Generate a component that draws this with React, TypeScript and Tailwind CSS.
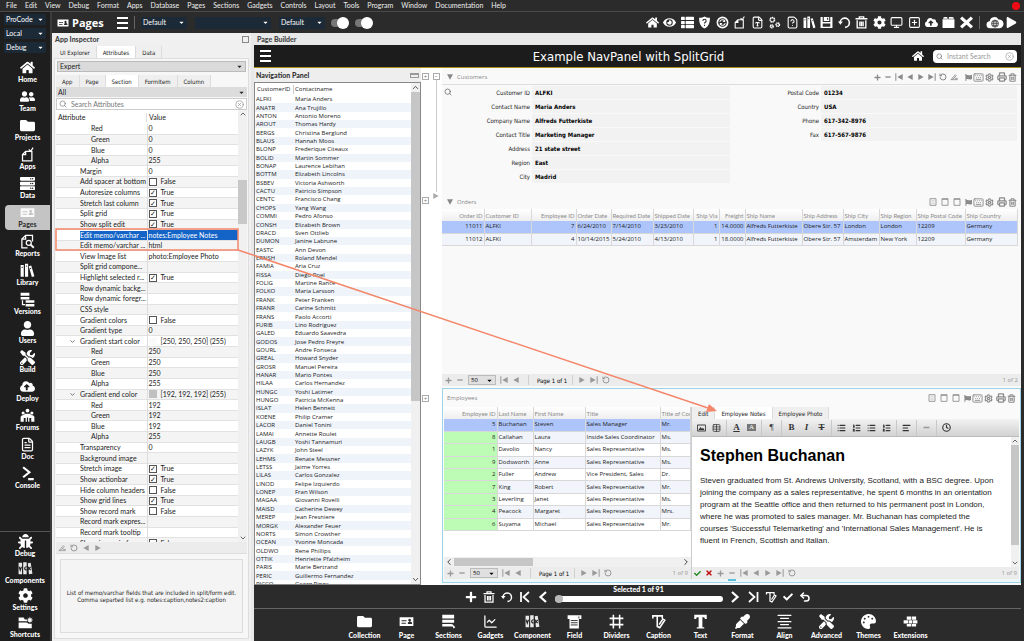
import React, { useState } from "react";
import type { IconType } from "react-icons";
import {
  FaBug,
  FaCaretDown,
  FaCheck,
  FaCloudUploadAlt,
  FaCog,
  FaEye,
  FaEyeDropper,
  FaFlag,
  FaFolder,
  FaHome,
  FaPalette,
  FaPlay,
  FaPlus,
  FaServer,
  FaThList,
  FaTimes,
  FaTools,
  FaUserFriends,
  FaUser,
} from "react-icons/fa";
import {
  AlignLeft,
  ChartLine,
  ChevronDown,
  ChevronLeft,
  ChevronRight,
  ChevronUp,
  CircleX,
  Clock,
  FileQuestionMark,
  FileText,
  FileType,
  Keyboard,
  List,
  ListOrdered,
  Monitor,
  Printer,
  RotateCcw,
  Search,
  Settings,
  SquarePlus,
  Table,
  Trash2,
  Undo2,
} from "lucide-react";

type Glyph = IconType | React.ElementType;

interface Tool {
  label: string;
  icon: Glyph;
}

interface Attribute {
  name: string;
  value?: string;
  level?: number;
  checked?: boolean;
  open?: boolean;
  swatch?: string;
}

type SvgProps = { className?: string };

// ---- custom icons ----

const PageCard = ({ className }: SvgProps) => (
  <svg viewBox="0 0 24 24" className={className} fill="currentColor" fillRule="evenodd">
    <path d="M1 5h22v14H1zM4 10v1.600h8V10zM4 14v1.600h7V14zM17 7.500a2.200 2.200 0 1 0 .01 0zM14 16h7c0-3-1.500-4-3.500-4S14 13 14 16z" />
  </svg>
);

const Books = ({ className }: SvgProps) => (
  <svg viewBox="0 0 24 24" className={className} fill="currentColor">
    <path d="M1 3h5v19H1zM8 1h5v21H8zM14 5l4-1 5 17-4 1.500z" />
    <path d="M2.500 7h2M9.500 5h2M16 9l2-.6" stroke="#222" strokeWidth="1.500" />
  </svg>
);

const BooksVcx = ({ className }: SvgProps) => (
  <svg viewBox="0 0 26 24" className={className} fill="currentColor">
    <path d="M1 2h6v20H1zM9 1h6v21H9zM17 3l5-1 3 19-6 1z" opacity="0.9" />
    <path d="M2 9l2 6 2-6M15 9c-4-1-5 6 0 5.500M17 9l5 6M22 9l-5 6" fill="none" stroke="#222" strokeWidth="2" />
  </svg>
);

const AppPage = ({ className }: SvgProps) => (
  <svg viewBox="0 0 24 24" className={className} fill="none" stroke="currentColor" strokeWidth="2">
    <path d="M9 7H19v15H4V12zM9 7v5H4" />
    <path d="M14 4l3 3 4-6" />
  </svg>
);

const ReportPage = ({ className }: SvgProps) => (
  <svg viewBox="0 0 24 24" className={className} fill="none" stroke="currentColor" strokeWidth="2">
    <path d="M20 12V2H9L3 8v14h9M9 2v6H3" />
    <circle cx="14" cy="14" r="4" />
    <path d="M17 17l5 5" strokeWidth="3" />
  </svg>
);

const Layers = ({ className }: SvgProps) => (
  <svg viewBox="0 0 24 24" className={className} fill="currentColor">
    <path d="M1 1h14v5H1zM1 8h14v4H1zM9 13h14v4H9zM9 19h14v4H9zM3 13h2v6h3v2H3z" />
  </svg>
);

const People = ({ className }: SvgProps) => (
  <svg viewBox="0 0 24 24" className={className} fill="currentColor">
    <circle cx="12" cy="4" r="3" />
    <circle cx="5" cy="8" r="2.500" />
    <circle cx="19" cy="8" r="2.500" />
    <path d="M1 22v-8q1-3 5-3l2-2h8l2 2q4 0 5 3v8h-5v-6h-3v6h-2v-7h-2v7H9v-6H6v6z" />
  </svg>
);

const Prompt = ({ className }: SvgProps) => (
  <svg viewBox="0 0 24 24" className={className} fill="none" stroke="currentColor" strokeWidth="3.500">
    <path d="M5 2l10 8-10 8M13 21h9" />
  </svg>
);

const FolderStar = ({ className }: SvgProps) => (
  <svg viewBox="0 0 24 24" className={className} fill="currentColor">
    <path d="M1 4h8l2 3h3l1 3H1zM1 12h13l3 2h5v7H1z" />
    <circle cx="19" cy="8" r="3" />
    <path d="M19 3v10M14 8h10M15.500 4.500l7 7M22.500 4.500l-7 7" stroke="currentColor" />
  </svg>
);

const Refresh = ({ className }: SvgProps) => (
  <svg viewBox="0 0 24 24" className={className} fill="none" stroke="currentColor" strokeWidth="3">
    <circle cx="12" cy="12" r="9.500" />
    <path d="M7 11a5 5 0 0 1 9-2M17 13a5 5 0 0 1-9 2" strokeWidth="2" />
    <path d="M17 6v5h-5zM7 18v-5h5z" fill="currentColor" stroke="none" />
  </svg>
);

const ShieldHelp = ({ className }: SvgProps) => (
  <svg viewBox="0 0 24 24" className={className} fill="currentColor">
    <path d="M12 1q5 3 10 2c0 9-2 16-10 20C4 19 2 12 2 3q5 1 10-2z" />
    <path d="M9 9c0-4 6-4 6 0 0 2.500-3 2.500-3 5M12 16v2.500" fill="none" stroke="#2b2b2b" strokeWidth="2" />
  </svg>
);

const Gears = ({ className }: SvgProps) => (
  <svg viewBox="0 0 24 24" className={className} fill="none" stroke="currentColor" strokeWidth="3">
    <circle cx="8" cy="7" r="4" strokeDasharray="2.500 .7" />
    <circle cx="7" cy="19" r="2.500" strokeDasharray="2 .6" />
    <circle cx="18" cy="16" r="3" strokeDasharray="2 .6" />
  </svg>
);

const Disk = ({ className }: SvgProps) => (
  <svg viewBox="0 0 24 24" className={className} fill="currentColor" fillRule="evenodd">
    <path d="M1 2h4v9h14V2h4v20H1zM7 2h10v7H7zM13 3v4h2V3zM5 14v6h14v-6z" />
  </svg>
);

const Bin = ({ className }: SvgProps) => (
  <svg viewBox="0 0 24 24" className={className} fill="none" stroke="currentColor" strokeWidth="2.500">
    <path d="M1 5h22M8 4V1.500h8V4M4 8v14h16V8M9 10v9M12 10v9M15 10v9" />
  </svg>
);

const Reset = ({ className }: SvgProps) => (
  <svg viewBox="0 0 24 24" className={className} fill="none" stroke="currentColor" strokeWidth="3">
    <path d="M4 13a8.500 8.500 0 1 1 9 8" />
    <path d="M0 10h9l-4.500 6z" fill="currentColor" stroke="none" />
  </svg>
);

const Box = ({ className }: SvgProps) => (
  <svg viewBox="0 0 24 24" className={className} fill="currentColor">
    <path d="M1 6h22v16H1zM2 5q0-3 3-3h4l2 3zM12 5l1-3h6q3 0 3 3z" />
  </svg>
);

const Cross = ({ className }: SvgProps) => (
  <svg viewBox="0 0 24 24" className={className} stroke="currentColor" strokeWidth="6">
    <path d="M2 3l20 18M22 3L2 21" />
  </svg>
);

const CloudGlobe = ({ className }: SvgProps) => (
  <svg viewBox="0 0 30 24" className={className} fill="currentColor">
    <path d="M7 21a6 6 0 0 1-1-12 8 8 0 0 1 15-3 7.500 7.500 0 0 1 2 15z" />
    <g fill="none" stroke="#444" strokeWidth="1.400">
      <circle cx="15" cy="13" r="6" />
      <ellipse cx="15" cy="13" rx="2.500" ry="6" />
      <path d="M9 13h12M10 10h10M10 16h10" />
    </g>
  </svg>
);

const SectionsIcon = ({ className }: SvgProps) => (
  <svg viewBox="0 0 24 24" className={className} fill="currentColor">
    <path d="M2 1h19v6H2zM2 9h19v5H2zM2 16h15l2 4H2zM17 15l6 6-3 2z" />
  </svg>
);

const FieldIcon = ({ className }: SvgProps) => (
  <svg viewBox="0 0 24 24" className={className} fill="currentColor">
    <path d="M1 2h22v6h-4v15H4V8H1z" />
    <path d="M6 10.500h11M6 14h11M6 17.500h11M19 4v3" stroke="#2b2b2b" strokeWidth="1.500" />
  </svg>
);

const Hash = ({ className }: SvgProps) => (
  <svg viewBox="0 0 24 24" className={className} fill="none" stroke="currentColor" strokeWidth="2.500">
    <path d="M7 1v22M17 1v22M1 7h22M1 17h22" />
  </svg>
);

const CaptionIcon = ({ className }: SvgProps) => (
  <svg viewBox="0 0 24 24" className={className} fill="none" stroke="currentColor" strokeWidth="2.500">
    <path d="M3 7V3h15v4M10 3v17l4 2 8-12-3-2-6 9" />
  </svg>
);

const TextIcon = ({ className }: SvgProps) => (
  <svg viewBox="0 0 24 24" className={className} fill="currentColor">
    <path d="M2 1h20v7h-3l-1-3h-3v16h3v2H6v-2h3V5H6L5 8H2z" />
  </svg>
);

const AlignIcon = ({ className }: SvgProps) => (
  <svg viewBox="0 0 24 24" className={className} stroke="currentColor" strokeWidth="2">
    <path d="M1 2h22M5 7h14M1 12h22M5 17h14M1 22h22" />
  </svg>
);

const Bricks = ({ className }: SvgProps) => (
  <svg viewBox="0 0 24 24" className={className} fill="currentColor">
    <path d="M6 4h7v5H6zM14 4h7v5h-7zM1 10h7v5H1zM9 10h6v5H9zM16 10h7v5h-7zM6 16h7v4H6zM14 16h7v4h-7z" />
  </svg>
);

const EdgeLeft = ({ className }: SvgProps) => (
  <svg viewBox="0 0 24 24" className={className} fill="none" stroke="currentColor" strokeWidth="3.500">
    <path d="M20 2L9 12l11 10M4 2v20" />
  </svg>
);

const EdgeRight = ({ className }: SvgProps) => (
  <svg viewBox="0 0 24 24" className={className} fill="none" stroke="currentColor" strokeWidth="3.500">
    <path d="M4 2l11 10L4 22M21 2v20" />
  </svg>
);

const AngleLeft = ({ className }: SvgProps) => (
  <svg viewBox="0 0 24 24" className={className} fill="none" stroke="currentColor" strokeWidth="4.500">
    <path d="M18 2L7 12l11 10" />
  </svg>
);

const AngleRight = ({ className }: SvgProps) => (
  <svg viewBox="0 0 24 24" className={className} fill="none" stroke="currentColor" strokeWidth="4.500">
    <path d="M6 2l11 10L6 22" />
  </svg>
);

const First = ({ className }: SvgProps) => (
  <svg viewBox="0 0 24 24" className={className} fill="currentColor">
    <path d="M1 1h3v22H1zM23 3v18L7 12z" />
  </svg>
);

const Last = ({ className }: SvgProps) => (
  <svg viewBox="0 0 24 24" className={className} fill="currentColor">
    <path d="M20 1h3v22h-3zM1 3v18l16-9z" />
  </svg>
);

const Prev = ({ className }: SvgProps) => (
  <svg viewBox="0 0 24 24" className={className} fill="currentColor">
    <path d="M20 3v18L4 12z" />
  </svg>
);

const Next = ({ className }: SvgProps) => (
  <svg viewBox="0 0 24 24" className={className} fill="currentColor">
    <path d="M4 3v18l16-9z" />
  </svg>
);

const Minus = ({ className }: SvgProps) => (
  <svg viewBox="0 0 24 24" className={className} fill="currentColor">
    <path d="M4 10h16v4H4z" />
  </svg>
);

const Pen = ({ className }: SvgProps) => (
  <svg viewBox="0 0 24 24" className={className} fill="none" stroke="currentColor" strokeWidth="2.500">
    <path d="M2 20h20M6 16L16 5l3 3-9 9-7 2M14 16h8v4" />
  </svg>
);

const BoxedPage = ({ className }: SvgProps) => (
  <svg viewBox="0 0 24 24" className={className} fill="none" stroke="currentColor" strokeWidth="2.500">
    <path d="M3 2h18v20H3z" />
    <path d="M7 7h10M7 12h10M7 17h10" strokeWidth="1" />
  </svg>
);

const BoxedPlain = ({ className }: SvgProps) => (
  <svg viewBox="0 0 24 24" className={className} fill="none" stroke="currentColor" strokeWidth="2.500">
    <path d="M3 2h18v20H3zM3 4h18" />
  </svg>
);

const Picture = ({ className }: SvgProps) => (
  <svg viewBox="0 0 24 24" className={className} fill="none" stroke="currentColor" strokeWidth="2.500">
    <path d="M1 4h22v16H1z" />
    <path d="M4 17l5-8 4 5 3-3 4 6z" fill="currentColor" stroke="none" />
  </svg>
);

// ---- data ----

const menus = [
  "File", "Edit", "View", "Debug", "Format", "Apps", "Database", "Pages", "Sections",
  "Gadgets", "Controls", "Layout", "Tools", "Program", "Window", "Documentation", "Help",
];

const sideTools: Tool[] = [
  { label: "Home", icon: FaHome },
  { label: "Team", icon: FaUserFriends },
  { label: "Projects", icon: FaFolder },
  { label: "Apps", icon: AppPage },
  { label: "Data", icon: FaServer },
  { label: "Pages", icon: PageCard },
  { label: "Reports", icon: ReportPage },
  { label: "Library", icon: Books },
  { label: "Versions", icon: Layers },
  { label: "Users", icon: FaUser },
  { label: "Build", icon: FaTools },
  { label: "Deploy", icon: FaCloudUploadAlt },
  { label: "Forums", icon: People },
  { label: "Doc", icon: FileText },
  { label: "Console", icon: Prompt },
];

const sideFooter: Tool[] = [
  { label: "Debug", icon: FaBug },
  { label: "Components", icon: BooksVcx },
  { label: "Settings", icon: FaCog },
  { label: "Shortcuts", icon: FolderStar },
];

const topTools: Tool[] = [
  { label: "Home", icon: FaHome },
  { label: "Preview", icon: FaEye },
  { label: "List", icon: FaThList },
  { label: "Security", icon: ShieldHelp },
  { label: "Refresh", icon: Refresh },
  { label: "New app", icon: AppPage },
  { label: "Text file", icon: FileType },
  { label: "Services", icon: Gears },
  { label: "Query", icon: FileQuestionMark },
  { label: "Library", icon: Books },
  { label: "Save", icon: Disk },
  { label: "Revert", icon: Reset },
  { label: "Delete", icon: Bin },
  { label: "Options", icon: FaCog },
  { label: "Monitor", icon: Monitor },
  { label: "Add", icon: SquarePlus },
  { label: "Upload", icon: FaCloudUploadAlt },
  { label: "Package", icon: Box },
  { label: "Close", icon: Cross },
];

const bottomTools: Tool[] = [
  { label: "Collection", icon: FaFolder },
  { label: "Page", icon: PageCard },
  { label: "Sections", icon: SectionsIcon },
  { label: "Gadgets", icon: ChartLine },
  { label: "Component", icon: BooksVcx },
  { label: "Field", icon: FieldIcon },
  { label: "Dividers", icon: Hash },
  { label: "Caption", icon: CaptionIcon },
  { label: "Text", icon: TextIcon },
  { label: "Format", icon: FaEyeDropper },
  { label: "Align", icon: AlignIcon },
  { label: "Advanced", icon: FaTools },
  { label: "Themes", icon: FaPalette },
  { label: "Extensions", icon: Bricks },
];

const attributes: Attribute[] = [
  { name: "Red", value: "0", level: 2 },
  { name: "Green", value: "0", level: 2 },
  { name: "Blue", value: "0", level: 2 },
  { name: "Alpha", value: "255", level: 2 },
  { name: "Margin", value: "0" },
  { name: "Add spacer at bottom", checked: false },
  { name: "Autoresize columns", checked: true },
  { name: "Stretch last column", checked: true },
  { name: "Split grid", checked: true },
  { name: "Show split edit", checked: true },
  { name: "Edit memo/varchar ...", value: "notes:Employee Notes" },
  { name: "Edit memo/varchar ...", value: "html" },
  { name: "View Image list", value: "photo:Employee Photo" },
  { name: "Split grid compone..." },
  { name: "Highlight selected r...", checked: true },
  { name: "Row dynamic backg..." },
  { name: "Row dynamic foregr..." },
  { name: "CSS style" },
  { name: "Gradient colors", checked: false },
  { name: "Gradient type", value: "0" },
  { name: "Gradient start color", value: "[250, 250, 250] (255)", open: true, swatch: "#fafafa" },
  { name: "Red", value: "250", level: 2 },
  { name: "Green", value: "250", level: 2 },
  { name: "Blue", value: "250", level: 2 },
  { name: "Alpha", value: "255", level: 2 },
  { name: "Gradient end color", value: "[192, 192, 192] (255)", open: true, swatch: "#c0c0c0" },
  { name: "Red", value: "192", level: 2 },
  { name: "Green", value: "192", level: 2 },
  { name: "Blue", value: "192", level: 2 },
  { name: "Alpha", value: "255", level: 2 },
  { name: "Transparency", value: "0" },
  { name: "Background image" },
  { name: "Stretch image", checked: true },
  { name: "Show actionbar", checked: true },
  { name: "Hide column headers", checked: false },
  { name: "Show grid lines", checked: true },
  { name: "Show record mark", checked: false },
  { name: "Record mark expres..." },
  { name: "Record mark tooltip" },
  { name: "Show image in form", checked: false },
];

const SELECTED_ATTRIBUTE = 10;

const contacts = [
  ["ALFKI", "Maria Anders"],
  ["ANATR", "Ana Trujillo"],
  ["ANTON", "Antonio Moreno"],
  ["AROUT", "Thomas Hardy"],
  ["BERGS", "Christina Berglund"],
  ["BLAUS", "Hannah Moos"],
  ["BLONP", "Frederique Citeaux"],
  ["BOLID", "Martin Sommer"],
  ["BONAP", "Laurence Lebihan"],
  ["BOTTM", "Elizabeth Lincolns"],
  ["BSBEV", "Victoria Ashworth"],
  ["CACTU", "Patricio Simpson"],
  ["CENTC", "Francisco Chang"],
  ["CHOPS", "Yang Wang"],
  ["COMMI", "Pedro Afonso"],
  ["CONSH", "Elizabeth Brown"],
  ["DRACD", "Sven Ottlieb"],
  ["DUMON", "Janine Labrune"],
  ["EASTC", "Ann Devon"],
  ["ERNSH", "Roland Mendel"],
  ["FAMIA", "Aria Cruz"],
  ["FISSA", "Diego Roel"],
  ["FOLIG", "Martine Rance"],
  ["FOLKO", "Maria Larsson"],
  ["FRANK", "Peter Franken"],
  ["FRANR", "Carine Schmitt"],
  ["FRANS", "Paolo Accorti"],
  ["FURIB", "Lino Rodriguez"],
  ["GALED", "Eduardo Saavedra"],
  ["GODOS", "Jose Pedro Freyre"],
  ["GOURL", "Andre Fonseca"],
  ["GREAL", "Howard Snyder"],
  ["GROSR", "Manuel Pereira"],
  ["HANAR", "Mario Pontes"],
  ["HILAA", "Carlos Hernandez"],
  ["HUNGC", "Yoshi Latimer"],
  ["HUNGO", "Patricia McKenna"],
  ["ISLAT", "Helen Bennett"],
  ["KOENE", "Philip Cramer"],
  ["LACOR", "Daniel Tonini"],
  ["LAMAI", "Annette Roulet"],
  ["LAUGB", "Yoshi Tannamuri"],
  ["LAZYK", "John Steel"],
  ["LEHMS", "Renate Messner"],
  ["LETSS", "Jaime Yorres"],
  ["LILAS", "Carlos Gonzalez"],
  ["LINOD", "Felipe Izquierdo"],
  ["LONEP", "Fran Wilson"],
  ["MAGAA", "Giovanni Rovelli"],
  ["MAISD", "Catherine Dewey"],
  ["MEREP", "Jean Fresniere"],
  ["MORGK", "Alexander Feuer"],
  ["NORTS", "Simon Crowther"],
  ["OCEAN", "Yvonne Moncada"],
  ["OLDWO", "Rene Phillips"],
  ["OTTIK", "Henriette Pfalzheim"],
  ["PARIS", "Marie Bertrand"],
  ["PERIC", "Guillermo Fernandez"],
  ["PICCO", "Georg Pipps"],
];

const customerLeft = [
  ["Customer ID", "ALFKI"],
  ["Contact Name", "Maria Anders"],
  ["Company Name", "Alfreds Futterkiste"],
  ["Contact Title", "Marketing Manager"],
  ["Address", "21 state street"],
  ["Region", "East"],
  ["City", "Madrid"],
];

const customerRight = [
  ["Postal Code", "01234"],
  ["Country", "USA"],
  ["Phone", "617-342-8976"],
  ["Fax", "617-567-9876"],
];

const orderColumns = [
  { title: "Order ID", width: "w-[42px]", right: true },
  { title: "Customer ID", width: "w-[47px]" },
  { title: "Employee ID", width: "w-[45px]", right: true },
  { title: "Order Date", width: "w-[35px]" },
  { title: "Required Date", width: "w-[42px]" },
  { title: "Shipped Date", width: "w-[40px]" },
  { title: "Ship Via", width: "w-[26px]", right: true },
  { title: "Freight", width: "w-[26px]", right: true },
  { title: "Ship Name", width: "w-[57px]" },
  { title: "Ship Address", width: "w-[41px]" },
  { title: "Ship City", width: "w-[36px]" },
  { title: "Ship Region", width: "w-[37px]" },
  { title: "Ship Postal Code", width: "w-[49px]" },
  { title: "Ship Country", width: "w-auto" },
];

const orders = [
  ["11011", "ALFKI", "7", "6/24/2010", "7/14/2010", "3/23/2010", "1", "14.0000", "Alfreds Futterkiste", "Obere Str. 57", "London", "London", "12209", "Germany"],
  ["11012", "ALFKI", "4", "10/14/2015", "5/24/2010", "4/13/2010", "1", "18.0000", "Alfreds Futterkiste", "Obere Str. 57", "Amsterdam", "New York", "12209", "Germany"],
];

const employeeColumns = [
  { title: "Employee ID", width: "w-[53px]", right: true },
  { title: "Last Name", width: "w-[36px]" },
  { title: "First Name", width: "w-[52px]" },
  { title: "Title", width: "w-[75px]" },
  { title: "Title of Courtesy", width: "w-auto" },
];

const employees = [
  ["5", "Buchanan", "Steven", "Sales Manager", "Mr."],
  ["8", "Callahan", "Laura", "Inside Sales Coordinator", "Ms."],
  ["1", "Davolio", "Nancy", "Sales Representative", "Ms."],
  ["9", "Dodsworth", "Anne", "Sales Representative", "Ms."],
  ["2", "Fuller", "Andrew", "Vice President, Sales", "Dr."],
  ["7", "King", "Robert", "Sales Representative", "Mr."],
  ["3", "Leverling", "Janet", "Sales Representative", "Ms."],
  ["4", "Peacock", "Margaret", "Sales Representative", "Mrs."],
  ["6", "Suyama", "Michael", "Sales Representative", "Mr."],
];

// ---- shared pieces ----

interface IconButtonProps {
  label: string;
  icon: Glyph;
  className?: string;
}

const IconButton = ({ label, icon: Icon, className = "size-2" }: IconButtonProps) => (
  <button type="button" aria-label={label} className="flex shrink-0 items-center justify-center">
    <Icon className={className} />
  </button>
);

const LabelledTool = ({ label, icon: Icon }: Tool) => (
  <>
    <Icon className="size-[15px]" />
    <span className="text-[7px] leading-[9px] font-black">{label}</span>
  </>
);

interface DropDownProps {
  label: string;
  value: string;
  className: string;
}

const DropDown = ({ label, value, className }: DropDownProps) => (
  <div className={`relative flex shrink-0 items-center ${className}`}>
    <select aria-label={label} defaultValue={value} className="h-full w-full appearance-none pl-[2px] outline-none">
      <option>{value}</option>
    </select>
    <FaCaretDown className="pointer-events-none absolute right-[2px] size-[7px]" />
  </div>
);

interface TabsProps {
  items: string[];
  initial: string;
  className?: string;
}

const Tabs = ({ items, initial, className = "" }: TabsProps) => {
  const [active, setActive] = useState(initial);
  return (
    <div
      role="tablist"
      className={`flex h-3 shrink-0 items-stretch font-['DejaVu_Sans_Condensed','Open_Sans',sans-serif] text-[6px] ${className}`}
    >
      {items.map((item) => (
        <button
          key={item}
          type="button"
          role="tab"
          aria-selected={item === active}
          onClick={() => setActive(item)}
          className={`border-r border-[#dcdcdc] px-[6px] whitespace-nowrap ${item === active ? "bg-white" : "bg-[#efefef]"}`}
        >
          {item}
        </button>
      ))}
    </div>
  );
};

const FormActions = () => (
  <div className="flex items-center gap-px">
    <IconButton label="Flag" icon={FaFlag} className="size-[7px]" />
    <IconButton label="Keyboard" icon={Keyboard} className="size-[11px]" />
    <IconButton label="Settings" icon={Settings} className="size-[9px] stroke-3" />
    <span className="w-px" />
    <IconButton label="Print" icon={Printer} className="size-[10px] stroke-3" />
    <IconButton label="Delete" icon={Trash2} className="size-[9px] stroke-3" />
  </div>
);

const ViewActions = () => (
  <div className="flex items-center gap-1 text-[#8a8a8a]">
    <IconButton label="Grid view" icon={BoxedPage} />
    <IconButton label="Form view" icon={BoxedPlain} />
    <IconButton label="Split view" icon={BoxedPlain} />
    <FormActions />
  </div>
);

const Pager = ({ total }: { total: string }) => (
  <div className="flex h-3 shrink-0 items-center gap-1 bg-[#ececec] px-[3px] text-[#999]">
    <IconButton label="Add row" icon={FaPlus} className="size-[7px]" />
    <IconButton label="Remove row" icon={Minus} />
    <DropDown label="Rows per page" value="50" className="h-[10px] w-[28px] border border-[#bbb] bg-[#e0e0e0] text-black" />
    <IconButton label="First page" icon={First} />
    <IconButton label="Previous page" icon={Prev} />
    <span className="mx-1 h-[10px] w-px bg-[#d0d0d0]" />
    <span className="font-['DejaVu_Sans_Condensed','Open_Sans',sans-serif] text-black">Page 1 of 1</span>
    <span className="mx-px h-[10px] w-px bg-[#d0d0d0]" />
    <IconButton label="Next page" icon={Next} />
    <IconButton label="Last page" icon={Last} />
    <IconButton label="Reload" icon={RotateCcw} className="size-2 stroke-3" />
    <span className="ml-auto">{total}</span>
  </div>
);

interface GridProps {
  columns: { title: string; width: string; right?: boolean }[];
  rows: string[][];
  className?: string;
  highlightIds?: boolean;
}

const DataGrid = ({ columns, rows, className = "", highlightIds = false }: GridProps) => (
  <table className={`w-full table-fixed border-collapse ${className}`}>
    <thead>
      <tr className="bg-gradient-to-b from-white to-[#eeeeee] text-[#8c8c8c]">
        {columns.map((column) => (
          <th
            key={column.title}
            className={`h-3 overflow-hidden border-r border-[#d8d8d8] px-px font-['Lato'] font-normal whitespace-nowrap ${column.width} ${column.right ? "text-right" : "text-left"}`}
          >
            {column.title}
          </th>
        ))}
      </tr>
    </thead>
    <tbody>
      {rows.map((row, index) => (
        <tr key={row[0]} className={index === 0 ? "bg-[#adc5fb]" : index % 2 ? "bg-[#f1f5fb]" : "bg-white"}>
          {row.map((cell, i) => (
            <td
              key={columns[i].title}
              className={`h-3 overflow-hidden border-r border-b border-[#d8d8d8] px-px whitespace-nowrap ${columns[i].right ? "text-right" : ""} ${highlightIds && i === 0 && index > 0 ? "bg-[#bdfcb4]" : ""}`}
            >
              {cell}
            </td>
          ))}
        </tr>
      ))}
    </tbody>
  </table>
);

// ---- left side ----

const SideBar = () => (
  <aside className="flex w-[52px] shrink-0 flex-col border-r-2 border-[#3c3c3c] bg-[#1e1e1e] text-white">
    <div className="flex flex-col gap-[3px] px-1 pt-[2px]">
      {["ProCode", "Local", "Debug"].map((value) => (
        <DropDown key={value} label={value} value={value} className="h-[11px] bg-[#1c2a38]" />
      ))}
    </div>
    <nav className="mt-[7px] flex flex-col gap-1 pl-[5px]">
      {sideTools.map((tool) => (
        <button
          key={tool.label}
          type="button"
          className={`flex h-[25px] flex-col items-center rounded-l-sm ${tool.label === "Pages" ? "bg-[#c4c4c4] text-[#fafafa] [&>span]:text-[#333]" : ""}`}
        >
          <LabelledTool {...tool} />
        </button>
      ))}
    </nav>
    <nav className="mt-auto flex flex-col gap-[2px] border-t border-[#555] pt-[2px] pb-px">
      {sideFooter.map((tool) => (
        <button key={tool.label} type="button" className="flex h-[25px] flex-col items-center">
          <LabelledTool {...tool} />
        </button>
      ))}
    </nav>
  </aside>
);

const AttributeValue = ({ attribute }: { attribute: Attribute }) => {
  if (attribute.checked !== undefined) {
    return (
      <label className="flex h-2 items-center gap-1">
        <input
          type="checkbox"
          defaultChecked={attribute.checked}
          className="flex size-2 appearance-none items-center justify-center border border-[#555] bg-white leading-none checked:before:content-['✓']"
        />
        {attribute.checked ? "True" : "False"}
      </label>
    );
  }
  if (attribute.swatch) {
    return (
      <span className="flex h-2 items-center gap-1">
        <span className="size-2" style={{ backgroundColor: attribute.swatch }} />
        {attribute.value}
      </span>
    );
  }
  return <>{attribute.value}</>;
};

const AttributeTable = () => {
  const [selected, setSelected] = useState(SELECTED_ATTRIBUTE);
  return (
    <div className="flex min-h-0 flex-1 bg-white">
      <div className="flex min-w-0 flex-1 flex-col">
        <div className="flex h-[14px] shrink-0 items-center">
          <span className="w-[91px] border-r border-[#ddd] pl-[2px]">Attribute</span>
          <span className="pl-[2px]">Value</span>
        </div>
        <div className="min-h-0 flex-1 overflow-hidden">
          <table className="h-[calc(100%+7px)] w-full table-fixed border-collapse">
            <tbody>
              {attributes.map((attribute, index) => (
                <tr
                  key={index}
                  onClick={() => setSelected(index)}
                  className={`border-b border-[#e2e2e2] ${index % 2 ? "bg-[#f4f4f4]" : "bg-white"}`}
                >
                  <td className="w-[91px] overflow-hidden border-r border-[#ddd] p-0 whitespace-nowrap">
                    <span className="flex items-stretch">
                      <span className={`flex shrink-0 items-center justify-end ${attribute.level === 2 ? "w-[35px]" : "w-6 pr-1"}`}>
                        {attribute.open && <ChevronDown className="size-[7px]" />}
                      </span>
                      <span className={`min-w-0 flex-1 ${index === selected ? "bg-[#1464c8] text-white" : ""}`}>
                        {attribute.name}
                      </span>
                    </span>
                  </td>
                  <td className={`overflow-hidden p-0 pl-px whitespace-nowrap ${index === selected ? "bg-[#1464c8] text-white" : ""}`}>
                    <AttributeValue attribute={attribute} />
                  </td>
                </tr>
              ))}
            </tbody>
          </table>
        </div>
      </div>
      <div className="flex w-[9px] shrink-0 flex-col items-center bg-[#f0f0f0]">
        <ChevronUp className="size-2" />
        <div className="flex flex-1 flex-col self-stretch pt-[62px]">
          <div className="h-11 bg-[#c8c8c8]" />
        </div>
        <ChevronDown className="size-2" />
      </div>
    </div>
  );
};

const Inspector = () => (
  <section className="flex w-[199px] shrink-0 flex-col bg-[#f0f0f0] px-[2px]">
    <header className="flex h-[13px] shrink-0 items-center justify-between pl-px">
      <h2 className="font-black text-[#444]">App Inspector</h2>
      <span className="size-[7px] border border-[#888]" />
    </header>
    <Tabs items={["UI Explorer", "Attributes", "Data"]} initial="Attributes" />
    <div className="mb-[2px] flex min-h-0 flex-1 flex-col border border-[#ddd] bg-[#f7f7f7] px-px">
      <DropDown label="Mode" value="Expert" className="mx-px mt-[2px] h-[11px] border border-[#bbb] bg-[#dadada]" />
      <Tabs items={["App", "Page", "Section", "FormItem", "Column"]} initial="Section" className="mt-[3px]" />
      <DropDown label="Filter" value="All" className="h-[10px] bg-[#dcdcdc]" />
      <label className="mt-px flex h-[12px] shrink-0 items-center gap-1 border border-[#ccc] bg-white px-[2px]">
        <Search className="size-2 text-[#777]" />
        <input type="text" aria-label="Search Attributes" placeholder="Search Attributes" className="min-w-0 flex-1 outline-none placeholder:text-[#777]" />
        <CircleX className="size-[9px] text-[#999]" />
      </label>
      <AttributeTable />
      <div className="flex h-3 shrink-0 items-center gap-1 border-b border-[#ddd] bg-[#ececec] pl-[2px] text-[#999]">
        <IconButton label="Edit" icon={Pen} />
        <IconButton label="Reset" icon={RotateCcw} className="size-2 stroke-3" />
        <IconButton label="Back" icon={Prev} />
        <IconButton label="Forward" icon={Next} />
      </div>
      <div className="mx-1 mt-[5px] mb-[5px] flex h-[74px] shrink-0 items-center justify-center border border-[#ddd] bg-[#f4f4f4]">
        <p className="text-center font-['DejaVu_Sans_Condensed','Open_Sans',sans-serif] text-[6px] leading-[7px]">
          List of memo/varchar fields that are included in split/form edit.
          <br />
          Comma separted list e.g. notes:caption,notes2:caption
        </p>
      </div>
    </div>
  </section>
);

// ---- page builder ----

const NavigationPanel = () => (
  <section className="flex w-[167px] shrink-0 flex-col">
    <header className="flex h-[14px] shrink-0 items-center justify-between bg-[#eeeeee] px-[2px]">
      <h3 className="font-['Lato'] text-[7px] font-black text-[#333]">Navigation Panel</h3>
      <span className="h-[5px] w-[9px] border border-t-2 border-[#999]" />
    </header>
    <div className="flex min-h-0 flex-1 border border-[#888] bg-white">
      <div className="flex min-w-0 flex-1 flex-col">
        <div className="flex h-3 shrink-0 items-center pl-[2px]">
          <span className="w-[37px] border-r border-[#ccc]">CustomerID</span>
          <span className="pl-px">Contactname</span>
        </div>
        <div className="min-h-0 flex-1 overflow-hidden">
          <table className="h-[calc(100%+5px)] w-full table-fixed border-collapse leading-[8px]">
            <tbody>
              {contacts.map(([id, name], index) => (
                <tr key={id} className={index % 2 ? "bg-[#eff3fa]" : "bg-white"}>
                  <td className="w-[38px] p-0 pl-px">{id}</td>
                  <td className="p-0 pl-[2px] whitespace-nowrap">{name}</td>
                </tr>
              ))}
            </tbody>
          </table>
        </div>
      </div>
      <div className="flex w-[9px] shrink-0 flex-col items-center bg-[#f0f0f0]">
        <ChevronUp className="size-[9px]" />
        <div className="flex-1 self-stretch">
          <div className="h-[64%] bg-[#c6c6c6]" />
        </div>
        <ChevronDown className="size-[9px]" />
      </div>
    </div>
  </section>
);

const Expander = ({ open = false }: { open?: boolean }) => (
  <button type="button" aria-label={open ? "Collapse" : "Expand"} className="flex size-[7px] items-center justify-center border border-[#aaa] leading-none text-[#777]">
    {open ? "−" : "+"}
  </button>
);

const SplitterRail = () => (
  <div className="flex w-[21px] shrink-0 justify-between bg-white pt-[5px] pr-[2px] pl-px">
    <div className="flex flex-col">
      <Expander />
      <span className="h-[117px]" />
      <Expander />
      <span className="h-[191px]" />
      <Expander />
    </div>
    <div className="flex flex-col items-center">
      <Expander open />
      <span className="h-[112px] w-px bg-[#ccc]" />
      <Next className="size-2 text-[#aaa]" />
    </div>
  </div>
);

interface FieldColumnProps {
  fields: string[][];
  className: string;
  labelWidth: string;
}

const FieldColumn = ({ fields, className, labelWidth }: FieldColumnProps) => (
  <dl className={`flex flex-col gap-px ${className}`}>
    {fields.map(([label, value]) => (
      <div key={label} className="flex h-[13px] items-center">
        <dt className={`pr-[2px] text-right ${labelWidth}`}>{label}</dt>
        <dd className="flex h-full flex-1 items-center bg-[#f2f2f2] pl-[3px] font-bold text-black">{value}</dd>
      </div>
    ))}
  </dl>
);

const SectionTitle = ({ title }: { title: string }) => (
  <h3 className="flex items-center gap-[3px] text-[#888]">
    <Next className="size-2 rotate-90" />
    {title}
  </h3>
);

const Customers = () => (
  <section className="flex h-[125px] shrink-0 flex-col">
    <header className="flex h-[15px] shrink-0 items-center justify-between border-b border-[#ddd] pr-1 pl-1">
      <SectionTitle title="Customers" />
      <div className="flex items-center gap-[3px] text-[#8a8a8a]">
        <IconButton label="Add" icon={FaPlus} className="size-[7px]" />
        <IconButton label="Remove" icon={Minus} />
        <IconButton label="First" icon={First} />
        <IconButton label="Previous" icon={Prev} />
        <IconButton label="Next" icon={Next} />
        <IconButton label="Last" icon={Last} />
        <IconButton label="Reload" icon={RotateCcw} className="size-2 stroke-3" />
        <IconButton label="Edit" icon={Pen} />
        <span className="w-px" />
        <FormActions />
      </div>
    </header>
    <div className="flex pt-px pr-1 font-['DejaVu_Sans_Condensed','Open_Sans',sans-serif]">
      <Search className="mt-[2px] ml-[2px] size-2 shrink-0 text-[#555]" />
      <FieldColumn fields={customerLeft} className="flex-[278]" labelWidth="w-[80px]" />
      <FieldColumn fields={customerRight} className="flex-[287]" labelWidth="w-[91px]" />
    </div>
  </section>
);

const Orders = () => (
  <section className="flex min-h-0 flex-1 flex-col">
    <header className="flex h-[14px] shrink-0 items-center justify-between pr-1 pl-1">
      <SectionTitle title="Orders" />
      <ViewActions />
    </header>
    <div className="min-h-0 flex-1 pr-[3px]">
      <DataGrid columns={orderColumns} rows={orders} />
    </div>
    <Pager total="1 of 2" />
  </section>
);

const ToolGroup = ({ children }: { children: React.ReactNode }) => (
  <div className="flex h-4 items-center gap-[6px] border-r border-[#c8c8c8] px-[5px] [&>button]:w-[9px]">{children}</div>
);

const NotesEditor = () => (
  <div className="flex min-w-0 flex-1 flex-col border-l border-[#ccc]">
    <Tabs items={["Edit", "Employee Notes", "Employee Photo"]} initial="Employee Notes" />
    <div className="flex h-[18px] shrink-0 items-center border-b border-[#bbb] bg-gradient-to-b from-[#f2f2f2] to-[#d2d2d2] font-['Liberation_Serif'] text-[9px] text-[#333]">
      <ToolGroup>
        <IconButton label="Image" icon={Picture} className="size-[10px]" />
        <IconButton label="Table" icon={Table} className="size-[10px]" />
      </ToolGroup>
      <ToolGroup>
        <button type="button" aria-label="Text colour" className="font-bold underline">A</button>
        <button type="button" aria-label="Highlight" className="bg-[#777] text-[7px] leading-[7px] text-white">A</button>
      </ToolGroup>
      <ToolGroup>
        <button type="button" aria-label="Paragraph">¶</button>
      </ToolGroup>
      <ToolGroup>
        <button type="button" aria-label="Bold" className="font-bold">B</button>
        <button type="button" aria-label="Italic" className="font-bold italic">I</button>
        <button type="button" aria-label="Strike" className="font-bold line-through">T</button>
      </ToolGroup>
      <ToolGroup>
        <IconButton label="Bullets" icon={List} className="size-[10px] stroke-3" />
        <IconButton label="Numbers" icon={ListOrdered} className="size-[10px] stroke-3" />
        <IconButton label="Outdent" icon={List} className="size-[10px] stroke-3" />
        <IconButton label="Indent" icon={ListOrdered} className="size-[10px] stroke-3" />
      </ToolGroup>
      <ToolGroup>
        <IconButton label="Align" icon={AlignLeft} className="size-[10px] stroke-3" />
      </ToolGroup>
      <ToolGroup>
        <IconButton label="Rule" icon={Minus} className="size-[9px] text-[#999]" />
      </ToolGroup>
      <div className="pl-[5px]">
        <IconButton label="History" icon={Clock} className="size-[9px] stroke-3" />
      </div>
    </div>
    <div className="flex min-h-0 flex-1 bg-white">
      <article className="min-w-0 flex-1 pt-2 pr-[11px] pl-2 font-['Liberation_Sans'] text-[8px] leading-[12px] text-[#222]">
        <h1 className="mb-[9px] text-[16px] leading-[21px] font-bold text-black">Stephen Buchanan</h1>
        <p>
          Steven graduated from St. Andrews University, Scotland, with a BSC degree. Upon joining the company as a
          sales representative, he spent 6 months in an orientation program at the Seattle office and then returned to
          his permanent post in London, where he was promoted to sales manager. Mr. Buchanan has completed the courses
          'Successful Telemarketing' and 'International Sales Management'. He is fluent in French, Scottish and Italian.
        </p>
      </article>
      <div className="flex w-2 shrink-0 flex-col items-center bg-[#f0f0f0]">
        <ChevronUp className="size-2" />
        <div className="flex-1 self-stretch">
          <div className="h-[88%] bg-[#c6c6c6]" />
        </div>
        <ChevronDown className="size-2" />
      </div>
    </div>
    <div className="flex h-3 shrink-0 items-center gap-1 bg-[#ececec] px-[2px] text-[#999]">
      <IconButton label="Apply" icon={FaCheck} className="size-[7px] text-[#1f8a1f]" />
      <IconButton label="Cancel" icon={FaTimes} className="size-2 text-[#c01010]" />
      <IconButton label="Add" icon={FaPlus} className="size-[7px]" />
      <IconButton label="Remove" icon={Minus} />
      <IconButton label="First" icon={First} />
      <IconButton label="Previous" icon={Prev} />
      <IconButton label="Next" icon={Next} />
      <IconButton label="Last" icon={Last} />
      <IconButton label="Reload" icon={RotateCcw} className="size-2 stroke-3" />
      <span className="ml-auto">1 of 9</span>
    </div>
  </div>
);

const Employees = () => (
  <section className="mt-[2px] flex h-[195px] shrink-0 flex-col border border-[#9fd3e8] bg-[#fafafa]">
    <header className="flex h-[18px] shrink-0 items-center justify-between pr-1 pl-1 text-[#888]">
      <h3>Employees</h3>
      <ViewActions />
    </header>
    <div className="flex min-h-0 flex-1 pr-px pl-px">
      <div className="flex w-[247px] shrink-0 flex-col bg-white">
        <div className="min-h-0 flex-1">
          <DataGrid columns={employeeColumns} rows={employees} className="h-[124px]" highlightIds />
        </div>
        <div className="flex h-[10px] shrink-0 items-center bg-[#f0f0f0]">
          <ChevronLeft className="size-[10px]" />
          <div className="h-2 flex-1">
            <div className="h-full w-[35%] bg-[#c6c6c6]" />
          </div>
          <ChevronRight className="size-[10px]" />
        </div>
        <Pager total="1 of 9" />
      </div>
      <NotesEditor />
    </div>
    <div className="flex h-[3px] shrink-0 justify-center bg-[#eef7fb]">
      <span className="h-[2px] w-2 bg-[#5bc0de]" />
    </div>
  </section>
);

const RecordBar = () => (
  <div className="flex h-6 shrink-0 items-center justify-center gap-[6px] border-b border-[#666] bg-[#2b2b2b] text-white">
    <IconButton label="Add record" icon={FaPlus} className="size-3" />
    <IconButton label="Delete record" icon={Bin} className="size-3" />
    <IconButton label="Undo" icon={Reset} className="size-3" />
    <IconButton label="First record" icon={EdgeLeft} className="size-3" />
    <IconButton label="Previous record" icon={AngleLeft} className="size-3" />
    <label className="flex flex-col items-center gap-[3px] self-start text-[7px] leading-[8px] font-black">
      Selected 1 of 91
      <input
        type="range"
        min={1}
        max={91}
        defaultValue={1}
        className="h-[6px] w-[168px] appearance-none rounded-sm bg-white [&::-webkit-slider-thumb]:size-2 [&::-webkit-slider-thumb]:appearance-none [&::-webkit-slider-thumb]:rounded-sm [&::-webkit-slider-thumb]:bg-[#b8b8b8]"
      />
    </label>
    <IconButton label="Next record" icon={AngleRight} className="size-3" />
    <IconButton label="Last record" icon={EdgeRight} className="size-3" />
    <IconButton label="Edit" icon={CaptionIcon} className="size-3" />
    <IconButton label="Confirm" icon={FaCheck} className="size-[10px]" />
    <IconButton label="Revert" icon={Undo2} className="size-3 stroke-3" />
  </div>
);

const PageBuilder = () => (
  <main className="ml-[3px] flex min-w-0 flex-1 flex-col">
    <header className="flex h-3 shrink-0 items-center bg-[#e8e8e8] pl-[3px]">
      <h2 className="font-black text-[#444]">Page Builder</h2>
    </header>
    <div className="grid h-[23px] shrink-0 grid-cols-[1fr_auto_1fr] items-center border-b border-[#a89020] bg-[#1c1c1c] pr-1 pl-[6px] text-white">
      <button type="button" aria-label="Menu" className="flex w-[11px] flex-col gap-[3px]">
        <span className="h-[2px] bg-white" />
        <span className="h-[2px] bg-white" />
        <span className="h-[2px] bg-white" />
      </button>
      <h1 className="mr-5 font-['DejaVu_Sans_Condensed','Open_Sans',sans-serif] text-[13px]">Example NavPanel with SplitGrid</h1>
      <div className="flex items-center justify-end gap-[9px]">
        <IconButton label="Home" icon={FaHome} className="size-3" />
        <label className="flex h-[13px] w-[84px] items-center gap-1 rounded bg-white px-[3px]">
          <Search className="size-[7px] text-[#666]" />
          <input type="text" aria-label="Instant Search" placeholder="Instant Search" className="min-w-0 flex-1 outline-none placeholder:text-[#999]" />
          <CircleX className="size-[9px] text-[#aaa]" />
        </label>
      </div>
    </div>
    <div className="flex min-h-0 flex-1 font-['Open_Sans',sans-serif] text-[6px]">
      <NavigationPanel />
      <SplitterRail />
      <div className="flex min-w-0 flex-1 flex-col bg-[#f9f9f9] pt-[2px] pb-[2px]">
        <Customers />
        <Orders />
        <Employees />
      </div>
    </div>
    <RecordBar />
    <nav className="flex h-8 shrink-0 justify-center bg-[#2b2b2b] pt-[5px] text-white">
      {bottomTools.map((tool) => (
        <button key={tool.label} type="button" className="flex w-[42px] flex-col items-center gap-[2px]">
          <LabelledTool {...tool} />
        </button>
      ))}
    </nav>
  </main>
);

const ToolBar = () => (
  <div className="flex h-[21px] shrink-0 items-center bg-[#2b2b2b] pr-1 pl-[5px] text-white">
    <PageCard className="size-3" />
    <h1 className="ml-[3px] w-[45px] font-['Open_Sans'] text-[11px] font-bold">Pages</h1>
    <button type="button" aria-label="Menu" className="flex w-[11px] flex-col gap-[3px]">
      <span className="h-[2px] bg-white" />
      <span className="h-[2px] bg-white" />
      <span className="h-[2px] bg-white" />
    </button>
    <span className="mx-[6px] h-[13px] w-px bg-[#666]" />
    <DropDown label="Style" value="Default" className="h-3 w-[46px] bg-[#1c2a38]" />
    <DropDown label="Page" value="" className="ml-2 h-3 w-[76px] bg-[#1c2a38]" />
    <DropDown label="Theme" value="Default" className="ml-2 h-3 w-[46px] bg-[#1c2a38]" />
    <div className="ml-[6px] flex gap-[6px]">
      {["Grid", "Snap"].map((label) => (
        <input
          key={label}
          type="checkbox"
          role="switch"
          aria-label={label}
          defaultChecked
          className="relative h-3 w-[18px] appearance-none before:absolute before:top-[2px] before:left-0 before:h-2 before:w-4 before:rounded-full before:bg-[#777] after:absolute after:right-0 after:size-3 after:rounded-full after:bg-white"
        />
      ))}
    </div>
    <div className="ml-auto flex w-[327px] items-center justify-between">
      {topTools.map((tool) => (
        <IconButton key={tool.label} {...tool} className="size-[13px]" />
      ))}
    </div>
    <span className="mx-[6px] h-[13px] w-px bg-[#666]" />
    <IconButton label="Publish" icon={CloudGlobe} className="h-[14px] w-[18px]" />
    <span className="w-[2px]" />
    <IconButton label="Run" icon={FaPlay} className="size-[11px]" />
  </div>
);

const App = () => (
  <div className="relative flex h-screen flex-col overflow-hidden bg-[#2b2b2b] font-['Lato','Open_Sans',sans-serif] text-[7px] leading-[9px] text-[#222]">
    <div className="flex h-3 shrink-0 items-center justify-between border-b border-[#4a4a4a] pr-1 pl-[6px] text-[#eee]">
      <nav className="flex gap-2">
        {menus.map((menu) => (
          <a key={menu} href="#">
            {menu}
          </a>
        ))}
      </nav>
      <span className="size-2 rounded-full bg-[#f00a14]" />
    </div>
    <div className="flex min-h-0 flex-1">
      <SideBar />
      <div className="mr-[3px] flex min-w-0 flex-1 flex-col bg-[#e8e8e8]">
        <ToolBar />
        <div className="flex min-h-0 flex-1">
          <Inspector />
          <PageBuilder />
        </div>
      </div>
    </div>

    {/* callout from the memo attribute to its tab */}
    <svg className="pointer-events-none absolute inset-0 size-full" fill="none" stroke="#f4876a">
      <rect x="56" y="229" width="182" height="21" strokeWidth="1.500" />
      <path d="M238 250L708 408" strokeWidth="1.500" />
      <path d="M717 411l-8-7-3 8z" fill="#f4876a" stroke="none" />
    </svg>
  </div>
);

export default App;
